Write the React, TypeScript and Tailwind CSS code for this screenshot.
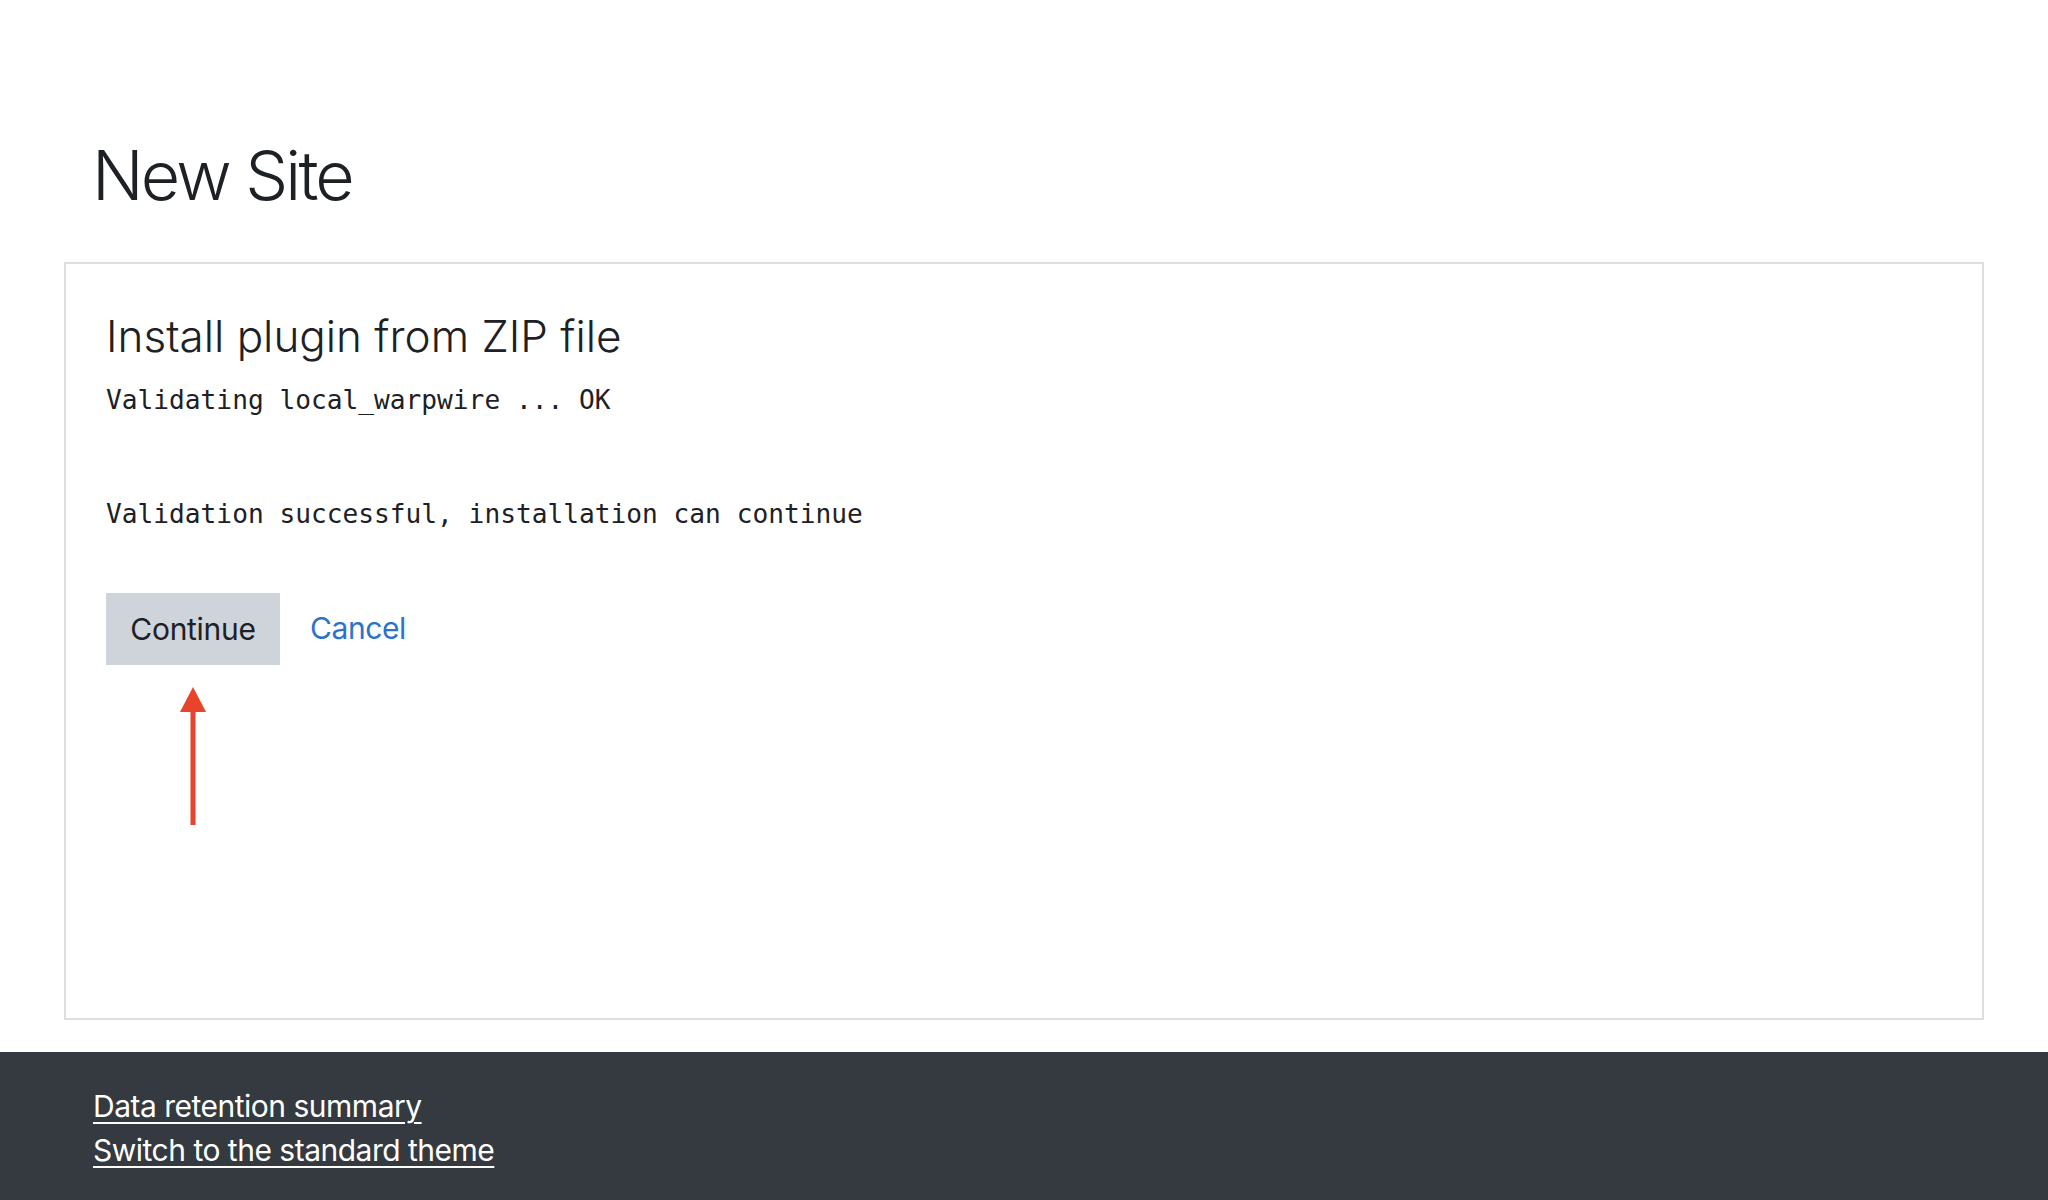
import React from "react";

const sans = "font-['Inter','Noto_Sans',sans-serif]";
const mono = "font-['DejaVu_Sans_Mono','Liberation_Mono',monospace]";

function UpArrow() {
  return (
    <svg width="26" height="138" viewBox="0 0 26 138" className="block">
      <polygon points="13,0 26,25 0,25" fill="#e8432b" />
      <rect x="10.5" y="22" width="5" height="116" fill="#e8432b" />
    </svg>
  );
}

export default function App() {
  return (
    <div className={`min-h-screen flex flex-col bg-white text-[#1d2125] ${sans}`}>
      {/* Page header */}
      <div className="pt-[135px] pl-[92px]">
        <h1 className="text-[68px] leading-[1.2] font-light tracking-[-2.8px]">New Site</h1>
      </div>

      {/* Main card */}
      <div className="mt-[45px] mx-[64px] h-[758px] border-2 border-[#dedede] pt-[46px] px-[40px]">
        <h2 className="text-[44px] leading-[1.2] font-light">
          Install plugin from ZIP file
        </h2>
        <pre className={`mt-[19px] text-[26.2px] leading-[39px] ${mono}`}>
          Validating local_warpwire ... OK
        </pre>
        <pre className={`mt-[75px] text-[26.2px] leading-[39px] ${mono}`}>
          Validation successful, installation can continue
        </pre>

        <div className="mt-[59px] flex items-center gap-[30px]">
          <button className="w-[174px] h-[72px] bg-[#ced4da] text-[30px] tracking-[-0.3px] text-[#1d2125] flex items-center justify-center">
            Continue
          </button>
          <a href="#" className="text-[30px] tracking-[-0.4px] text-[#2a73cc] mb-[1px]">
            Cancel
          </a>
        </div>

        <div className="mt-[22px] ml-[74px]">
          <UpArrow />
        </div>
      </div>

      {/* Footer */}
      <footer className="mt-[32px] flex-1 bg-[#343a40] pt-[32px] pl-[93px] pb-[27px] text-[30px] leading-[44px] tracking-[-0.5px] text-white">
        <div>
          <a href="#" className="underline underline-offset-[5px] decoration-2">
            Data retention summary
          </a>
        </div>
        <div>
          <a href="#" className="underline underline-offset-[5px] decoration-2">
            Switch to the standard theme
          </a>
        </div>
      </footer>
    </div>
  );
}
